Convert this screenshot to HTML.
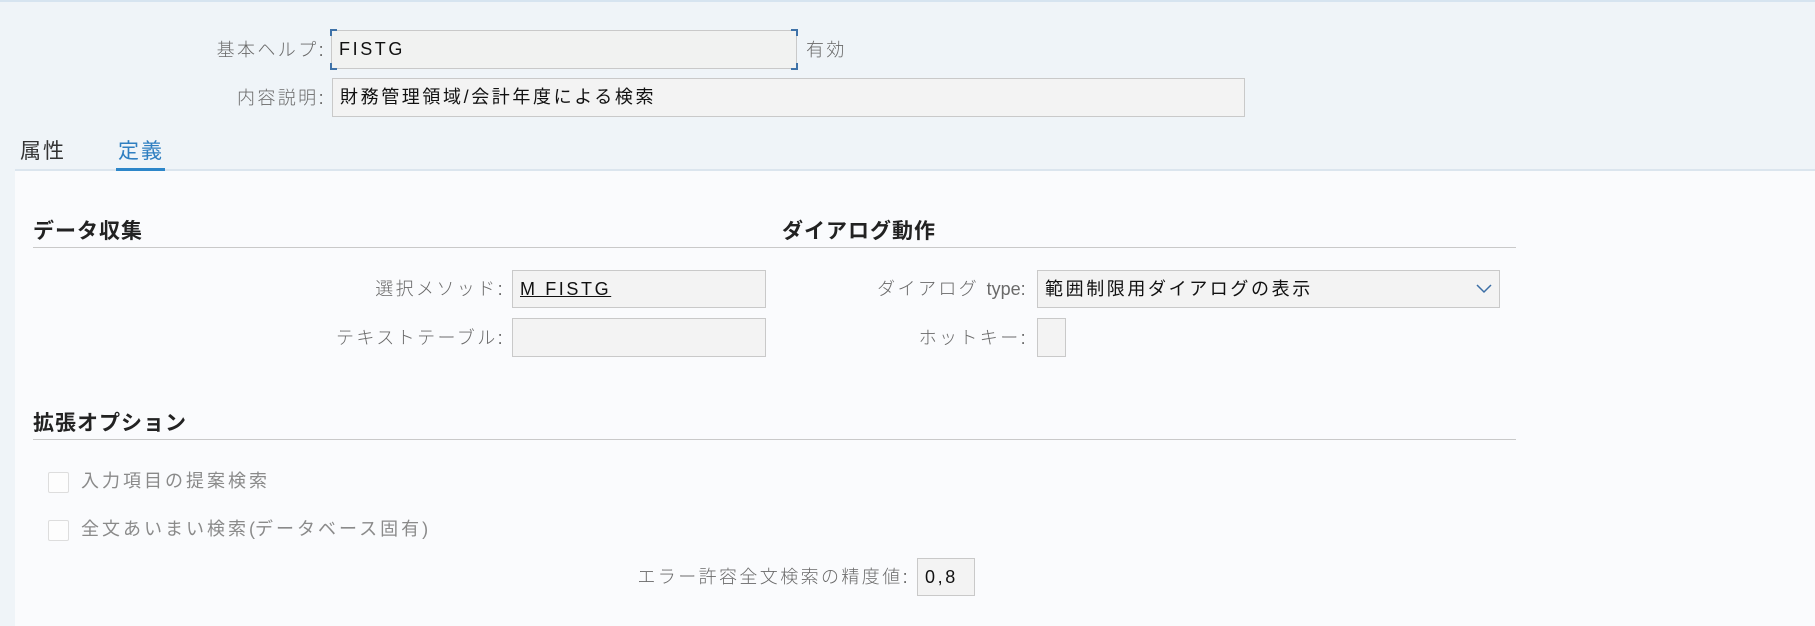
<!DOCTYPE html>
<html><head><meta charset="utf-8"><style>
*{margin:0;padding:0;box-sizing:border-box}
body{width:1815px;height:626px;background:#eff4f8;font-family:"Liberation Sans","Noto Sans CJK JP",sans-serif;position:relative;overflow:hidden;color:#222}
.a{position:absolute;white-space:nowrap}
.top{left:0;top:0;width:1815px;height:2px;background:#d6e4f0}
.content{left:15px;top:171px;width:1800px;height:455px;background:#fafbfd}
.tabline{left:15px;top:169px;width:1800px;height:2px;background:#dbe5ee}
.lbl{font-size:18px;letter-spacing:2.4px;color:#6a6a6a;text-align:right;line-height:22px;font-weight:300}
.box{background:#f3f3f3;border:1px solid #c9c9c9;font-size:18px;letter-spacing:2.6px;line-height:36px;padding-left:7px;color:#111}
.h{font-size:21px;letter-spacing:1px;font-weight:bold;color:#222;line-height:24px}
.hl{height:1px;background:#c9c9c9}
.cb{width:21px;height:21px;border:1px solid #ddd;background:#fdfdfd;border-radius:2px}
.ct{font-size:18px;letter-spacing:3px;color:#8a8a8a;line-height:22px}
.cor{width:7px;height:7px;border-color:#3f72a8;border-style:solid}
.l{letter-spacing:0}
</style></head><body>
<div class="a top"></div>
<div class="a content"></div>
<div class="a tabline"></div>

<div class="a lbl" style="right:1489px;top:39px">基本ヘルプ:</div>
<div class="a box" style="left:331px;top:30px;width:466px;height:39px;background:#f1f2f1">FISTG</div>
<div class="a cor" style="left:330px;top:29px;border-width:2px 0 0 2px"></div>
<div class="a cor" style="left:791px;top:29px;border-width:2px 2px 0 0"></div>
<div class="a cor" style="left:330px;top:63px;border-width:0 0 2px 2px"></div>
<div class="a cor" style="left:791px;top:63px;border-width:0 2px 2px 0"></div>
<div class="a lbl" style="left:806px;top:39px;text-align:left">有効</div>

<div class="a lbl" style="right:1489px;top:87px">内容説明:</div>
<div class="a box" style="left:332px;top:78px;width:913px;height:39px">財務管理領域/会計年度による検索</div>

<div class="a" style="left:20px;top:135px;font-size:21px;letter-spacing:2px;color:#333">属性</div>
<div class="a" style="left:118px;top:135px;font-size:21px;letter-spacing:2px;color:#2f7fc1">定義</div>
<div class="a" style="left:116px;top:168px;width:49px;height:3px;background:#2d86c9"></div>

<div class="a h" style="left:33px;top:220px">データ収集</div>
<div class="a h" style="left:782px;top:220px">ダイアログ動作</div>
<div class="a hl" style="left:33px;top:247px;width:1483px"></div>

<div class="a lbl" style="right:1310px;top:278px">選択メソッド:</div>
<div class="a box" style="left:512px;top:270px;width:254px;height:38px"><span style="text-decoration:underline">M FISTG</span></div>
<div class="a lbl" style="right:1310px;top:327px">テキストテーブル:</div>
<div class="a box" style="left:512px;top:318px;width:254px;height:39px"></div>

<div class="a lbl" style="right:787px;top:278px">ダイアログ <span class="l">type</span>:</div>
<div class="a box" style="left:1037px;top:270px;width:463px;height:38px">範囲制限用ダイアログの表示</div>
<svg class="a" style="left:1476px;top:283px" width="16" height="12"><path d="M1 2 L8 9 L15 2" fill="none" stroke="#3b6ea5" stroke-width="1.5"/></svg>
<div class="a lbl" style="right:787px;top:327px">ホットキー:</div>
<div class="a box" style="left:1037px;top:318px;width:29px;height:39px"></div>

<div class="a h" style="left:33px;top:412px">拡張オプション</div>
<div class="a hl" style="left:33px;top:439px;width:1483px"></div>

<div class="a cb" style="left:48px;top:472px"></div>
<div class="a ct" style="left:81px;top:470px">入力項目の提案検索</div>
<div class="a cb" style="left:48px;top:520px"></div>
<div class="a ct" style="left:81px;top:518px">全文あいまい検索<span class="l">(</span>データベース固有<span class="l">)</span></div>

<div class="a lbl" style="right:905px;top:566px">エラー許容全文検索の精度値:</div>
<div class="a box" style="left:917px;top:558px;width:58px;height:38px">0,8</div>
</body></html>
